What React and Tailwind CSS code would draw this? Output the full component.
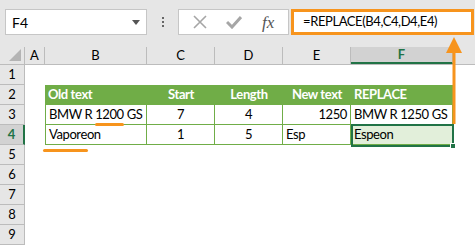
import React from "react";

const cols = [
  { key: "A", w: "w-[20px]" },
  { key: "B", w: "w-[102px]" },
  { key: "C", w: "w-[68px]" },
  { key: "D", w: "w-[68px]" },
  { key: "E", w: "w-[68px]" },
  { key: "F", w: "w-[102px]" },
];

const rows = [
  null,
  { head: true, cells: ["Old text", "Start", "Length", "New text", "REPLACE"] },
  { cells: ["BMW R 1200 GS", "7", "4", "1250", "BMW R 1250 GS"] },
  { cells: ["Vaporeon", "1", "5", "Esp", "Espeon"], sel: true },
  null,
  null,
  null,
  null,
  null,
];

const align = ["justify-start", "justify-center", "justify-center", "justify-end", "justify-start"];
const headAlign = ["justify-start", "justify-center", "justify-center", "justify-center", "justify-start"];

const Cell = ({ row, ci, value }) => {
  if (row.head) {
    return (
      <div
        className={`${cols[ci + 1].w} h-full bg-[#70ad47] text-white font-bold flex items-center whitespace-nowrap tracking-[-0.4px] px-[3px] ${headAlign[ci]}`}
      >
        {value}
      </div>
    );
  }
  let a = align[ci];
  if (ci === 3 && value === "Esp") a = "justify-start";
  return (
    <div
      className={`${cols[ci + 1].w} h-full flex items-center whitespace-nowrap tracking-[-0.4px] px-[3px] border-b border-r border-[#70ad47] ${ci === 0 ? "border-l" : ""} ${ci === 4 && row.sel ? "bg-[#e2efda]" : ""} ${a}`}
    >
      {value}
    </div>
  );
};

export default function App() {
  return (
    <div
      className="relative w-[475px] h-[247px] bg-white overflow-hidden text-[13px] text-black"
      style={{ fontFamily: "Lato, 'Open Sans', sans-serif" }}
    >
      {/* formula bar */}
      <div className="h-[47px] bg-[#e6e6e6] flex items-start pt-[9px]">
        <div className="ml-[5px] w-[142px] h-[26px] bg-white border border-[#c6c6c6] flex items-center justify-between px-[6px]">
          <span className="text-[14px]">F4</span>
          <span className="w-0 h-0 border-l-[4px] border-r-[4px] border-t-[5px] border-l-transparent border-r-transparent border-t-[#555]" />
        </div>
        <div className="w-[31px] h-[26px] flex flex-col items-center justify-center gap-[2px]">
          <span className="w-[2px] h-[2px] bg-[#666]" />
          <span className="w-[2px] h-[2px] bg-[#666]" />
          <span className="w-[2px] h-[2px] bg-[#666]" />
        </div>
        <div className="w-[111px] h-[26px] bg-white border border-[#c6c6c6] flex items-center justify-around px-[4px]">
          <svg width="14" height="14" viewBox="0 0 14 14">
            <path d="M1 1 L13 13 M13 1 L1 13" stroke="#a6a6a6" strokeWidth="1.6" />
          </svg>
          <svg width="16" height="14" viewBox="0 0 16 14">
            <path d="M1 7 L6 12 L15 2" stroke="#a6a6a6" strokeWidth="3" fill="none" />
          </svg>
          <span
            className="italic text-[17px] text-[#555] leading-none"
            style={{ fontFamily: "'Liberation Serif', serif" }}
          >
            fx
          </span>
        </div>
        <div className="ml-[2px] w-[183px] h-[26px] bg-white border-[3px] border-[#f7941d] flex items-center pl-[9px] text-[13px] tracking-[-0.4px] whitespace-nowrap">
          =REPLACE(B4,C4,D4,E4)
        </div>
      </div>

      {/* column headers */}
      <div className="flex h-[18px] bg-[#e6e6e6] border-b border-[#bcbcbc]">
        <div className="w-[25px] h-full border-r border-[#bcbcbc] relative">
          <svg className="absolute right-[3px] bottom-[3px]" width="12" height="12" viewBox="0 0 12 12">
            <path d="M12 0 L12 12 L0 12 Z" fill="#b4b4b4" />
          </svg>
        </div>
        {cols.map((c) => (
          <div
            key={c.key}
            className={`${c.w} h-full flex items-center justify-center border-r border-[#bcbcbc] ${c.key === "F" ? "bg-[#d2d2d2] text-[#217346] font-bold border-b-2 border-b-[#217346]" : ""}`}
          >
            {c.key}
          </div>
        ))}
        <div className="flex-1" />
      </div>

      {/* rows */}
      {rows.map((row, ri) => {
        const active = ri === 3;
        return (
          <div key={ri} className="flex h-[20px]">
            <div
              className={`w-[25px] h-full flex items-center justify-center border-b border-[#bcbcbc] ${active ? "bg-[#d2d2d2] text-[#217346] font-bold border-r-2 border-r-[#217346]" : "bg-[#e6e6e6] border-r border-r-[#bcbcbc]"}`}
            >
              {ri + 1}
            </div>
            <div className="w-[20px] h-full" />
            {row ? row.cells.map((v, ci) => <Cell key={ci} row={row} ci={ci} value={v} />) : null}
          </div>
        );
      })}

      {/* selection F4 */}
      <div className="absolute left-[351px] top-[124px] w-[103px] h-[23px] border-2 border-[#217346]" />
      <div className="absolute left-[450px] top-[143px] w-[6px] h-[6px] bg-[#217346] border border-white" />

      {/* annotations */}
      <div className="absolute left-[95px] top-[123px] w-[29px] h-[3px] rounded-full bg-[#f7941d]" />
      <div className="absolute left-[43px] top-[149px] w-[45px] h-[3px] rounded-full bg-[#f7941d]" />
      <svg className="absolute left-[445px] top-[36px]" width="18" height="90" viewBox="0 0 18 90">
        <path d="M9 1 L17 17 L1 17 Z" fill="#f7941d" />
        <rect x="7.5" y="16" width="3" height="72" fill="#f7941d" />
      </svg>
    </div>
  );
}
